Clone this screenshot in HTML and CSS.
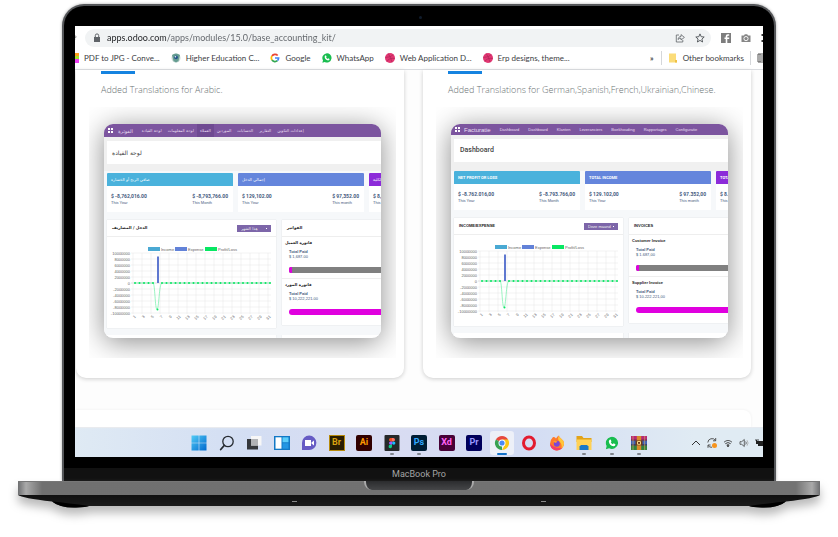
FILE: index.html
```html
<!DOCTYPE html>
<html lang="en">
<head>
<meta charset="utf-8">
<meta name="viewport" content="width=device-width, initial-scale=1">
<title>base_accounting_kit</title>
<link rel="stylesheet" href="styles.css">
</head>
<body>
<div class="laptop">
  <div class="lid">
    <span class="camera"></span>
    <div class="screen">
      <header class="toolbar">
        <svg class="reload" viewBox="0 0 4 10"><path d="M0 1H2V4H0M0 7h1" stroke="#555" fill="none"/></svg>
        <div class="omnibox">
          <svg class="lock" viewBox="0 0 8 10"><path d="M1 4h6v5H1z" fill="#5f6368"/><path d="M2.3 4V2.6a1.7 1.7 0 0 1 3.4 0V4" fill="none" stroke="#5f6368"/></svg>
          <input class="url" type="text" aria-label="Address" value="apps.odoo.com/apps/modules/15.0/base_accounting_kit/">
          <button class="tool" aria-label="Share"><svg viewBox="0 0 10 10"><path d="M4 2H1.3v7h6.5V7M3 6.5C3.3 4.3 4.5 3.6 6 3.5V1.6L9.4 4.4 6 7V5.2C4.7 5.2 3.8 5.6 3 6.5z" fill="none" stroke="#5f6368" stroke-width=".8"/></svg></button>
          <button class="tool" aria-label="Bookmark"><svg viewBox="0 0 10 10"><path d="M5 .9l1.2 2.8 3 .3-2.3 2 .7 3L5 7.4 2.400 9l.7-3L.8 4l3-.3z" fill="none" stroke="#4d5156" stroke-width=".9"/></svg></button>
        </div>
        <button class="tool" aria-label="Facebook"><svg viewBox="0 0 10 10"><path d="M0 0h10v10H0z" fill="#7d7d7d"/><path d="M6.300 10V6H8.200V4.600H6.300V3.500q0-.8.9-.8h1V1.300H6.700Q4.700 1.300 4.700 3.300V4.600H3.500V6H4.700V10z" fill="#fff"/></svg></button>
        <button class="tool" aria-label="Capture"><svg viewBox="0 0 10 10"><path d="M.5 2.500H3L3.800 1.300H6.200L7 2.500H9.500V9H.5z" fill="#868686"/><circle cx="5" cy="5.600" r="2.100" fill="none" stroke="#fff" stroke-width=".9"/></svg></button>
        <svg class="more" viewBox="0 0 2 10"><path d="M.5 1h1.500v2H.5zM.5 7h1.500v2H.5z" fill="#333"/></svg>
      </header>
      <nav class="bookmarks">
        <a href="#"><svg class="sliver" viewBox="0 0 4 10"><path d="M0 0h4v3H0z" fill="#ff9d1c"/><path d="M0 3h4v3H0z" fill="#a6e22a"/><path d="M0 6h4v4H0z" fill="#ea3cf0"/></svg>PDF to JPG - Conve...</a>
        <a href="#"><svg viewBox="0 0 10 10"><circle cx="5" cy="5" r="4.500" fill="#c8d8d4"/><path d="M1 2q4-3 8 0L7.500 8 5 9.500 2.500 8z" fill="#659d91"/><circle cx="5" cy="4.300" r="1.900" fill="#24538a"/><circle cx="4.400" cy="3.800" r=".8" fill="#e9f2ff"/></svg>Higher Education C...</a>
        <a href="#"><svg viewBox="0 0 10 10" fill="none" stroke-width="1.700"><path d="M2 3A3.600 3.600 0 0 1 7.700 2.500" stroke="#ea4335"/><path d="M2 3A3.600 3.600 0 0 0 2 7" stroke="#fbbc05"/><path d="M2 7A3.600 3.600 0 0 0 7.400 7.700" stroke="#34a853"/><path d="M7.400 7.700Q8.600 6.600 8.600 5H5" stroke="#4285f4"/></svg>Google</a>
        <a href="#"><svg viewBox="0 0 10 10"><use href="#whatsapp"/></svg>WhatsApp</a>
        <a href="#"><svg viewBox="0 0 10 10"><use href="#dribbble"/></svg>Web Application D...</a>
        <a href="#"><svg viewBox="0 0 10 10"><use href="#dribbble"/></svg>Erp designs, theme...</a>
        <button class="overflow" aria-label="More bookmarks">»</button>
        <a href="#" class="folder"><svg viewBox="0 0 10 10"><path d="M1 .5h7V7l1 1v1.500H1z" fill="#fbdc79"/><path d="M7 7h2v2.500H7z" fill="#efc145"/></svg>Other bookmarks</a>
        <svg class="reading" viewBox="0 0 6 10"><path d="M6 1H1v8h5M3 1v8M4 3h2M4 5h2M4 7h2" stroke="#555" fill="none"/></svg>
      </nav>

      <main class="page">
        <section class="card">
          <div class="accent"></div>
          <p class="caption">Added Translations for Arabic.</p>
          <div class="frame">
            <div class="dashboard arabic">
              <nav class="menu"><i class="apps"></i><b>الفوترة</b><a href="#">لوحة القيادة</a><a href="#">لوحة المعلومات</a><a href="#" class="current">العملاء</a><a href="#">الموردين</a><a href="#">الحسابات</a><a href="#">التقارير</a><a href="#">إعدادات التكوين</a></nav>
              <h2>لوحة القيادة</h2>
              <div class="tiles">
                <article class="tile sky"><h3>صافي الربح أو الخسارة</h3><div class="figures"><p><b>$ -8,762,016.00</b>This Year</p><p><b>$ -8,793,766.00</b>This Month</p></div></article>
                <article class="tile blue"><h3>إجمالي الدخل</h3><div class="figures"><p><b>$ 129,102.00</b>This Year</p><p><b>$ 97,352.00</b>This month</p></div></article>
                <article class="tile violet"><h3>الكلية</h3><div class="figures"><p><b>$ 8,891,118.00</b>This Year</p></div></article>
              </div>
              <div class="panels">
                <article class="panel">
                  <div class="head"><h3>الدخل / المصاريف</h3><select aria-label="الفترة"><option>هذا الشهر</option></select></div>
                  <svg class="chart" viewBox="0 0 169 90"></svg>
                </article>
                <article class="panel invoices">
                  <div class="head"><h3>الفواتير</h3></div>
                  <div class="invoice"><h4>فاتورة العميل</h4><p><b>Total Paid</b>$ 1,687.00</p><div class="bar"><span class="start"></span></div></div>
                  <div class="invoice"><h4>فاتورة المورد</h4><p><b>Total Paid</b>$ 10,222,221.00</p><div class="bar full"></div></div>
                </article>
              </div>
              <div class="panels next"><div class="panel"></div><div class="panel invoices"></div></div>
            </div>
          </div>
        </section>
        <section class="card">
          <div class="accent"></div>
          <p class="caption">Added Translations for German,Spanish,French,Ukrainian,Chinese.</p>
          <div class="frame">
            <div class="dashboard">
              <nav class="menu"><i class="apps"></i><b>Facturatie</b><a href="#">Dashboard</a><a href="#">Dashboard</a><a href="#">Klanten</a><a href="#">Leveranciers</a><a href="#">Boekhouding</a><a href="#">Rapportages</a><a href="#">Configuratie</a></nav>
              <h2>Dashboard</h2>
              <div class="tiles">
                <article class="tile sky"><h3>NET PROFIT OR LOSS</h3><div class="figures"><p><b>$ -8.762.016,00</b>This Year</p><p><b>$ -8.793.766,00</b>This Month</p></div></article>
                <article class="tile blue"><h3>TOTAL INCOME</h3><div class="figures"><p><b>$ 129.102,00</b>This Year</p><p><b>$ 97.352,00</b>This month</p></div></article>
                <article class="tile violet"><h3>TOTAL EXPENSES</h3><div class="figures"><p><b>$ 8.891.118,00</b>This Year</p></div></article>
              </div>
              <div class="panels">
                <article class="panel">
                  <div class="head"><h3>INCOME/EXPENSE</h3><select aria-label="Period"><option>Deze maand</option></select></div>
                  <svg class="chart" viewBox="0 0 169 90"></svg>
                </article>
                <article class="panel invoices">
                  <div class="head"><h3>INVOICES</h3></div>
                  <div class="invoice"><h4>Customer Invoice</h4><p><b>Total Paid</b>$ 1.687,00</p><div class="bar"><span class="start"></span></div></div>
                  <div class="invoice"><h4>Supplier Invoice</h4><p><b>Total Paid</b>$ 10.222.221,00</p><div class="bar full"></div></div>
                </article>
              </div>
              <div class="panels next"><div class="panel"></div><div class="panel invoices"></div></div>
            </div>
          </div>
        </section>
        <div class="upcoming"></div>
      </main>

      <footer class="taskbar">
        <div class="apps-row">
          <button aria-label="Start"><svg viewBox="0 0 16 16"><defs><linearGradient id="win" x2="1" y2="1"><stop stop-color="#52cbf6"/><stop offset="1" stop-color="#0069ce"/></linearGradient></defs><path d="M.5.500h7.200v7.200H.5zM8.300.500h7.200v7.200H8.300zM.5 8.300h7.200v7.200H.5zM8.300 8.300h7.200v7.200H8.300z" fill="url(#win)"/></svg></button>
          <button aria-label="Search"><svg viewBox="0 0 16 16" fill="none" stroke="#262b31"><circle cx="9" cy="6.500" r="5.200" stroke-width="1.300"/><path d="M5.200 10.500L1.700 14.500" stroke-width="1.800" stroke-linecap="round"/></svg></button>
          <button aria-label="Task view"><svg viewBox="0 0 16 16"><path d="M1 4h11v10.500H1z" fill="#35383c"/><path d="M5 1h10.500v9.500H5z" fill="#f7f7f7"/><path d="M5 4h7v6.500H5z" fill="#b1b3b6"/></svg></button>
          <button aria-label="Widgets"><svg viewBox="0 0 16 16"><path d="M0 1h16v14H0z" fill="#1178c6"/><path d="M1.500 2.300h6v11.400h-6z" fill="#fff"/><path d="M8.500 2.300h6v5h-6z" fill="#5bcdfa"/><path d="M8.500 8.200h6v5.500h-6z" fill="#2396e3"/></svg></button>
          <button aria-label="Chat"><svg viewBox="0 0 16 16"><path d="M1 15V8a7.200 7.200 0 1 1 7 7z" fill="#665bc4"/><path d="M4 5h6v6H4zM10.500 7.500l2.500-2v5l-2.500-2z" fill="#fff"/></svg></button>
          <button class="adobe br" aria-label="Bridge">Br</button>
          <button class="adobe ai" aria-label="Illustrator">Ai</button>
          <button class="running" aria-label="Figma"><svg viewBox="0 0 16 16"><rect x=".5" width="15" height="16" rx="1" fill="#262829"/><path d="M8 3H6.700a1.700 1.700 0 0 0 0 3.400H8z" fill="#f24e1e"/><path d="M8 3h1.300a1.700 1.700 0 0 1 0 3.400H8z" fill="#ff7262"/><path d="M8 6.400H6.700a1.700 1.700 0 0 0 0 3.400H8z" fill="#a259ff"/><circle cx="9.700" cy="8.100" r="1.700" fill="#1abcfe"/><path d="M8 9.800H6.700A1.700 1.700 0 1 0 8 11.500z" fill="#0acf83"/></svg></button>
          <button class="adobe ps running" aria-label="Photoshop">Ps</button>
          <button class="adobe xd" aria-label="Adobe XD">Xd</button>
          <button class="adobe pr" aria-label="Premiere">Pr</button>
          <button class="active" aria-label="Chrome"><svg viewBox="0 0 16 16"><path d="M8 8L1.900 4.500A7 7 0 0 1 14.100 4.500z" fill="#e6483d"/><path d="M8 8L1.900 4.500A7 7 0 0 0 8 15z" fill="#38a252"/><path d="M8 4.500h6.100A7 7 0 0 1 8 15L11 9.500z" fill="#fbc714"/><circle cx="8" cy="8" r="3.500" fill="#fff"/><circle cx="8" cy="8" r="2.600" fill="#4a8af4"/></svg></button>
          <button aria-label="Opera"><svg viewBox="0 0 16 16"><ellipse cx="8" cy="8" rx="5.500" ry="6" fill="none" stroke="#e31b2f" stroke-width="3"/></svg></button>
          <button aria-label="Firefox"><svg viewBox="0 0 16 16"><path d="M4 2q2 0 3 1.400Q8.500 1 10 .5q-.2 1.500 2 3 3 2 3 5.300a7 6.800 0 0 1-14 0Q1 5 4 2z" fill="#ff7a2b"/><path d="M10 .5q-.2 1.500 2 3 3 2 3 5.300-.3 3-2.500 4.800 1-4-2-7.100Q8 4 10 .5z" fill="#ffc73a"/><path d="M1 8.800Q1.500 14 6 15.300q4.500.8 7-2.300-5 .5-8.500-1.500z" fill="#f33d6b"/><circle cx="7.800" cy="8.700" r="3" fill="#7a46d8"/><path d="M4 6.500q2-1.500 4.500.2L6.500 8z" fill="#ff9a32"/></svg></button>
          <button class="running" aria-label="File Explorer"><svg viewBox="0 0 16 16"><path d="M.5 1h5.500l1.500 2h8v4H.5z" fill="#e2a31a"/><path d="M.5 4.500h15V15H.5z" fill="#ffd154"/><path d="M3.500 15v-3.500l1.500-1.500h6l1.500 1.500V15z" fill="#1878c8"/></svg></button>
          <button class="running" aria-label="WhatsApp"><svg viewBox="-1 -1 12 12"><use href="#whatsapp" width="10" height="10"/></svg></button>
          <button class="running" aria-label="WinRAR"><svg viewBox="0 0 16 16"><path d="M0 1h16v4.700H0z" fill="#b52a75"/><path d="M0 5.700h16v4.600H0z" fill="#3e63b8"/><path d="M0 10.300h16V15H0z" fill="#31823f"/><path d="M0 4.800h16v.8H0zM0 9.600h16v.8H0z" fill="#2b2236"/><path d="M5.800 1h4.400v14H5.800z" fill="#d98b2a"/><path d="M4.500 5.500h7v4.800h-7z" fill="#6b3b1d"/><path d="M6.500 6.500h3v2.800h-3z" fill="none" stroke="#f4d480"/><path d="M2 1v14M13.700 1v14" stroke="#e9b65b" stroke-width=".6"/></svg></button>
        </div>
        <div class="tray">
          <svg viewBox="0 0 10 10"><path d="M1 7l4-4 4 4" fill="none" stroke="#333"/></svg>
          <svg viewBox="0 0 10 10"><path d="M.8 4.500A4.200 4.200 0 0 1 8.500 2.500M8.700 0v2.800H6M1 9.800V7h2.600M1.200 7.500Q2.500 9.500 5 9.300" fill="none" stroke="#444" stroke-width=".9"/><circle cx="7.500" cy="7.500" r="2.500" fill="#f7941d"/></svg>
          <svg viewBox="0 0 10 10" fill="none" stroke="#333"><path d="M1 4.200q4-3.500 8 0" stroke-width=".8"/><path d="M2.300 5.700q2.700-2.300 5.400 0M3.600 7.200q1.400-1.200 2.800 0" stroke-width=".9"/><circle cx="5" cy="8" r=".6" fill="#333"/></svg>
          <svg viewBox="0 0 10 10" fill="none" stroke="#444" stroke-width=".8"><path d="M1 3.700h1.700L5.300 1.500v7L2.700 6.300H1zM6.700 3.500q1.200 1.500 0 3"/><path d="M8 2.200q2.200 2.800 0 5.600" stroke="#aaa"/></svg>
          <svg class="battery" viewBox="0 0 8 10"><path d="M2 3h6v5H3V6H1V2h1z" fill="#222"/><path d="M1 1v2M3 1v2" stroke="#222" stroke-width=".8"/></svg>
        </div>
      </footer>
    </div>
    <div class="chin">MacBook Pro</div>
  </div>
  <div class="base">
    <div class="deck"><span class="notch"></span></div>
    <svg class="underside" viewBox="0 0 802 13" preserveAspectRatio="none">
      <defs><linearGradient id="under" x2="0" y2="1"><stop stop-color="#101010"/><stop offset="1" stop-color="#1c1c1c"/></linearGradient></defs>
      <path d="M0 0H802Q798 3 768 6.500 760 13 744 12.500 734 12 731 11H71Q68 12 58 12.500 42 13 34 6.500 4 3 0 0z" fill="url(#under)"/>
      <path d="M34 6.500Q50 8 71 11 68 12 58 12.500 42 13 34 6.500zM768 6.500Q752 8 731 11 734 12 744 12.500 760 13 768 6.500z" fill="#000"/>
      <path d="M274 6.500h5M523 6.500h5" stroke="#888"/>
    </svg>
  </div>
</div>

<svg class="symbols" aria-hidden="true">
  <symbol id="whatsapp" viewBox="0 0 10 10"><path d="M.4 9.700L1 7.300A4.600 4.600 0 1 1 2.800 9z" fill="#19bd4f"/><path d="M3.200 2.500l.8-.1.600 1.400-.5.700q.5 1 1.500 1.400l.6-.7 1.400.7q0 1.400-1.500 1.500Q3 7 2.600 3.700z" fill="#fff"/></symbol>
  <symbol id="dribbble" viewBox="0 0 10 10"><circle cx="5" cy="5" r="5" fill="#e23672"/><path d="M3.200.6Q6 4 7 9.500M.2 4.400Q5.500 4.700 8.400 1.600M1.800 8.600Q4 4.500 9.800 5.500" fill="none" stroke="#a82455" stroke-width=".6"/></symbol>
</svg>
<script src="chart.js"></script>
</body>
</html>
```
FILE: styles.css
```css
* { box-sizing: border-box; }
body { margin: 0; background: #fff; font-family: "Open Sans", "Noto Sans", sans-serif; overflow: hidden; }
button { border: 0; padding: 0; background: none; font: inherit; color: inherit; }
a { color: inherit; text-decoration: none; }
h2, h3, h4, p { margin: 0; }
svg { display: block; }
.symbols { position: absolute; width: 0; height: 0; }

.laptop { padding: 4px 18px 30px; }
.lid {
  position: relative;
  margin: 0 44px;
  padding: 20px 11px 0;
  border: 2px solid #55575a;
  border-bottom: 0;
  border-radius: 22px 22px 0 0;
  background: #000;
  box-shadow: 0 0 3px #aaa;
}
.camera { position: absolute; top: 10px; left: 50%; width: 3px; height: 3px; border-radius: 50%; background: #101c2c; }
.screen { overflow: hidden; background: #fff; }
.chin { margin: 11px -11px 0; height: 13px; background: #111; color: #a5a5a5; font: 9px/12px Roboto, sans-serif; text-align: center; }

.toolbar { display: flex; align-items: center; gap: 10px; height: 24px; }
.reload { width: 2px; height: 10px; margin-right: -2px; }
.omnibox { flex: 1; display: flex; align-items: center; gap: 10px; height: 18px; padding: 0 6px 0 8px; border-radius: 9px; background: #f1f3f4; }
.lock { width: 8px; height: 10px; margin-right: -4px; }
.url {
  flex: 1; min-width: 0; border: 0; padding: 0; outline: 0;
  font: 9px/16px Lato, sans-serif;
  color: transparent;
  background: linear-gradient(to right, #202124 59px, #5f6368 59px);
  -webkit-background-clip: text; background-clip: text;
}
.tool, .tool svg { width: 10px; height: 10px; }
.more { width: 2px; height: 10px; }
.bookmarks { display: flex; align-items: center; gap: 11px; height: 20px; padding-bottom: 4px; border-bottom: 1px solid #dadce0; font: 8px/14px Lato, sans-serif; color: #3c4043; white-space: nowrap; }
.bookmarks a { display: flex; align-items: center; gap: 5px; }
.bookmarks a svg { width: 10px; height: 10px; }
.bookmarks a svg.sliver { width: 4px; }
.overflow { margin-left: auto; font-weight: 700; }
.bookmarks .folder { margin-left: -4px; padding: 0 6px; border: solid #d5d7da; border-width: 0 1px; }
.bookmarks .reading { width: 6px; height: 10px; margin-left: -5px; }

.page { display: grid; grid-template-columns: 1fr 1fr; column-gap: 19px; padding: 0 12px 0 1px; background: #fdfdfd; }
.card { display: flex; flex-direction: column; min-width: 0; padding: 1px 8px 20px 13px; border-radius: 0 0 10px 10px; background: #fff; box-shadow: 0 1px 4px #ccc; }
.accent { width: 34px; height: 3px; margin-left: 12px; background: #1583e0; }
.caption { padding: 8px 0 9px 12px; font-size: 9px; line-height: 16px; font-weight: 300; color: #6b7374; white-space: nowrap; }
.frame { flex: 1; display: flex; padding: 17px 15px 20px; overflow: hidden; }
.upcoming { grid-column: 1 / -1; height: 17px; margin-top: 32px; border-radius: 0 8px 0 0; background: #fff; box-shadow: 0 0 3px #eee; }

.dashboard { flex: 1; display: flex; flex-direction: column; min-width: 0; overflow: hidden; border-radius: 9px; background: linear-gradient(#f0f0f0 47px, #f6f8fa 47px); box-shadow: 0 4px 28px #8c8c8c; font-family: "Liberation Sans", sans-serif; font-size: 4px; color: #45597d; white-space: nowrap; }
.menu { display: flex; align-items: center; gap: 9px; height: 11px; padding-left: 4px; background: #7c559f; color: #eadff2; }
.menu b { margin-left: -5px; font-size: 6px; font-weight: 400; }
.apps { width: 5px; height: 5px; background: linear-gradient(#7c559f, #7c559f) center / 1px 100% no-repeat, linear-gradient(#7c559f, #7c559f) center / 100% 1px no-repeat, #fff; }
.dashboard h2 { margin: 4px 0 9px 3px; padding-left: 6px; background: #fff; color: #444; font: 500 7px/23px Roboto, sans-serif; }
.tiles { display: flex; gap: 5px; margin-left: 3px; }
.tile { flex: 0 0 126px; border-radius: 1px 1px 0 0; overflow: hidden; background: #fff; }
.tile h3 { padding-left: 4px; font: 700 4px/13px Roboto, sans-serif; color: #fff; }
.sky h3 { background: #4ab2dc; }
.blue h3 { background: #6485dc; }
.violet h3 { background: #8c2bd9; }
.figures { display: flex; justify-content: space-between; height: 26px; padding: 7px 5px 0 4px; line-height: 6px; }
.figures b { display: block; font: 700 5px/7px Roboto, sans-serif; }
.panels { display: flex; gap: 6px; margin: 8px 0 0 3px; align-items: flex-start; }
.panel { flex: 0 0 169px; height: 108px; background: #fff; box-shadow: 0 0 1px #ccc; }
.panel.invoices { flex: 1; height: 105px; }
.next { flex: 1 0 3px; margin-top: 7px; overflow: hidden; align-items: stretch; }
.next .panel, .next .panel.invoices { height: auto; }
.head { display: flex; align-items: center; justify-content: space-between; height: 17px; padding: 0 5px; border-bottom: 1px solid #eee; }
.head h3 { font: 700 4px/6px "Liberation Sans", sans-serif; color: #222; }
.head select { width: 34px; height: 7px; padding: 0 4px; border: 0; border-radius: 0; appearance: none; font: 4px/7px "Liberation Sans", sans-serif; color: #eee; background: linear-gradient(135deg, #fff 50%, transparent 50%) 29px 3px / 2px 2px no-repeat, #7d66a9; }
.chart { width: 100%; height: 90px; font-family: "Liberation Sans", sans-serif; }
.invoice { padding: 3px 0 0 3px; height: 41px; }
.invoice + .invoice { border-top: 1px solid #eee; }
.invoice h4 { font: 700 4px/6px "Liberation Sans", sans-serif; color: #222; }
.invoice p { margin: 3px 0 8px 4px; line-height: 5px; }
.invoice p b { display: block; }
.bar { height: 6px; margin-left: 4px; border-radius: 2px 0 0 2px; overflow: hidden; background: #808080; }
.bar.full { border-radius: 3px 0 0 3px; background: #e000df; }
.start { display: block; width: 3px; height: 6px; background: #e000df; }

.arabic .menu { gap: 6px; height: 13px; font-family: "DejaVu Sans", sans-serif; }
.arabic .menu b { margin: 0 3px 0 -1px; font-size: 5px; }
.arabic .current { padding: 0 3px; margin: 0 -3px; line-height: 13px; background: #6f4a92; }
.arabic h2, .arabic h3, .arabic h4, .arabic .head h3, .arabic select { font-family: "DejaVu Sans", sans-serif; }
.arabic h2 { padding-left: 5px; font-size: 6px; }
.arabic .tile h3 { font-weight: 400; }

.taskbar { display: flex; align-items: center; justify-content: space-between; height: 30px; padding-left: 116px; background: linear-gradient(90deg, #dfeaf4, #d3def3 25%, #d9dcf2 45%, #d3dcf3 65%, #e0ebf3 90%); border-top: 1px solid #e6eaf0; }
.apps-row { flex: 1; display: flex; justify-content: space-between; margin-right: 44px; }
.apps-row button { position: relative; width: 16px; height: 16px; }
.apps-row .adobe { border-radius: 2px; font: 700 9px/15px Roboto, sans-serif; text-align: center; }
.apps-row .br { border: 1px solid #b78a0c; border-radius: 0; line-height: 13px; background: #2a1d02; color: #d9a210; }
.ai { background: #310000; color: #ff9a00; }
.ps { background: #001d34; color: #31a8ff; }
.xd { background: #470137; color: #ff61f6; }
.pr { background: #00005b; color: #9999ff; }
.running::after, .active::after { content: ""; position: absolute; bottom: -4px; left: 6px; width: 4px; height: 2px; border-radius: 1px; background: #80858d; }
.active::after { left: 3px; width: 10px; background: #1271c8; }
.apps-row .active { box-shadow: 0 0 0 4px #edf0f8; border-radius: 1px; background: #edf0f8; }
.tray { display: flex; align-items: center; gap: 6px; }
.tray svg { width: 10px; height: 10px; }
.tray .battery { width: 8px; }

.base { position: relative; filter: drop-shadow(0 7px 5px #bbb); }
.deck { height: 14px; border-top: 1px solid #777; background: linear-gradient(90deg, #6d6e70, #aaa 1%, #707070 3%, #737373 97%, #aaa 99%, #6d6e70); }
.notch { display: block; width: 110px; height: 9px; margin: -1px auto 0; border: solid #aaa; border-width: 0 2px; border-radius: 0 0 8px 8px; background: linear-gradient(#2b2c2e, #454648); }
.underside { width: 100%; height: 13px; }
```
FILE: chart.js
```js
const NS = "http://www.w3.org/2000/svg";

function add(svg, tag, attrs, text) {
  const el = document.createElementNS(NS, tag);
  for (const key in attrs) el.setAttribute(key, attrs[key]);
  if (text !== undefined) el.textContent = text;
  svg.appendChild(el);
}

function drawChart(svg) {
  const left = 26, right = 164, top = 16, rowStep = 6, dayStep = 4.5;
  const zero = top + 5 * rowStep;
  const series = [["Income", "#4aa9d3", 41], ["Expense", "#6282d8", 68], ["Profit/Loss", "#08e763", 98]];

  for (const [name, color, x] of series) {
    add(svg, "rect", { x, y: 10, width: 12, height: 4, fill: color });
    add(svg, "text", { x: x + 13, y: 13.5, "font-size": 4, fill: "#666" }, name);
  }
  for (let row = 0; row <= 10; row++) {
    const y = top + row * rowStep;
    add(svg, "path", { d: `M${left - 2} ${y}H${right}`, stroke: row === 5 ? "#bbb" : "#e4e4e4", "stroke-width": 0.5 });
    add(svg, "text", { x: left - 3, y: y + 1.5, "font-size": 4, fill: "#666", "text-anchor": "end" }, 10000000 - row * 2000000);
  }
  for (let day = 1; day <= 31; day += 2) {
    const x = left + (day - 1) * dayStep;
    const label = x + 3, base = top + 10 * rowStep + 4;
    add(svg, "path", { d: `M${x} ${top}V${top + 10 * rowStep + 1}`, stroke: "#e4e4e4", "stroke-width": 0.5 });
    add(svg, "text", { x: label, y: base, "font-size": 4, fill: "#666", "text-anchor": "end", transform: `rotate(-45 ${label} ${base})` }, day);
  }
  add(svg, "rect", { x: 50, y: top + 3.5, width: 2, height: 26.5, fill: "#5f78d0" });
  add(svg, "path", { d: `M28 ${zero}H46C48 ${zero} 48 ${zero + 26.5} 50 ${zero + 26.5}S52 ${zero} 55 ${zero}H163`, fill: "none", stroke: "#58ec98", "stroke-width": 0.6 });
  for (let day = 1; day <= 31; day++) {
    add(svg, "circle", { cx: 28 + (day - 1) * dayStep, cy: day === 6 ? zero + 26.5 : zero, r: 1, fill: "#08e763" });
  }
}

document.querySelectorAll(".chart").forEach(drawChart);
```
